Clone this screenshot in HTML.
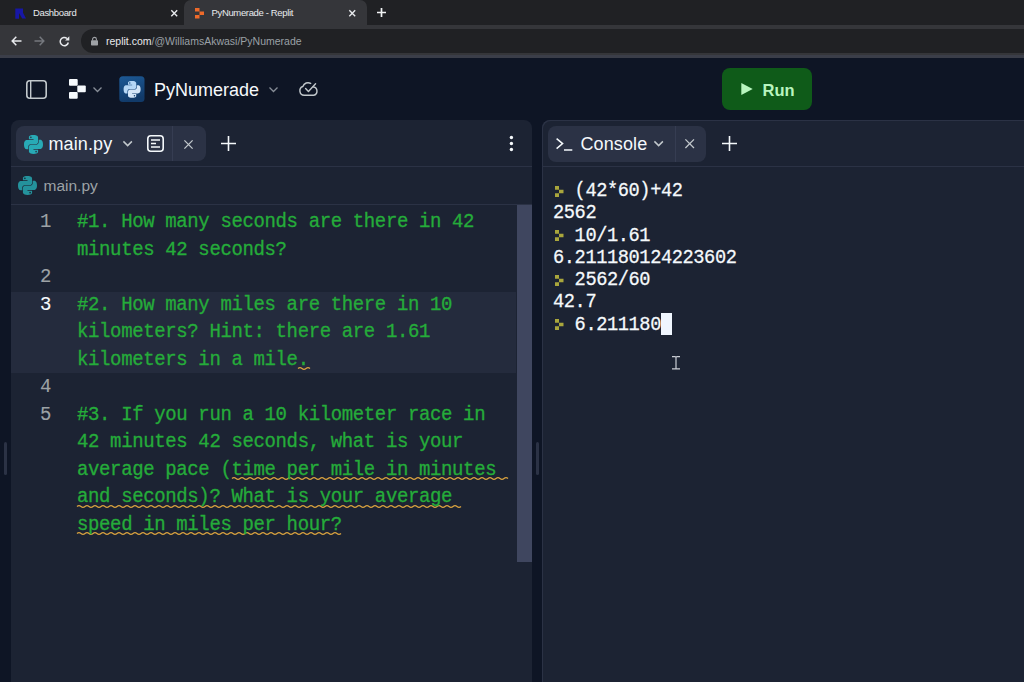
<!DOCTYPE html>
<html lang="en">
<head>
<meta charset="utf-8">
<title>PyNumerade - Replit</title>
<style>
*{box-sizing:border-box;margin:0;padding:0}
html,body{width:1024px;height:682px;overflow:hidden;background:#0e1525;font-family:"Liberation Sans",sans-serif;color:#f5f9fc}
.abs{position:absolute}
svg{position:absolute;overflow:visible}
#chrome-tabs{position:absolute;left:0;top:0;width:1024px;height:25px;background:#202124}
#chrome-addr{position:absolute;left:0;top:25px;width:1024px;height:30px;background:#35363a}
#chrome-line{position:absolute;left:0;top:55px;width:1024px;height:3px;background:#3b3e49}
.tab-active{position:absolute;left:184px;top:0;width:183px;height:25px;background:#35363a;border-radius:7px 7px 0 0}
.tabtxt{position:absolute;top:7px;font-size:9.5px;line-height:12px;color:#e8eaed;white-space:nowrap;letter-spacing:-0.35px}
.urlpill{position:absolute;left:81px;top:29px;width:960px;height:24px;border-radius:12px;background:#202124}
.url{position:absolute;left:106px;top:34.5px;font-size:10.5px;line-height:13px;color:#e8eaed;white-space:nowrap}
.url span{color:#9aa0a6}
#page{position:absolute;left:0;top:58px;width:1024px;height:624px;background:#0e1525}
.title{position:absolute;left:154px;top:22.5px;font-size:18px;line-height:18px;color:#f5f9fc;white-space:nowrap}
.run{position:absolute;left:722px;top:10px;width:90px;height:42px;border-radius:8px;background:#0f5b19}
.run span{position:absolute;left:40.5px;top:13.8px;font-size:16.5px;line-height:17px;font-weight:bold;color:#b8f5be}
.panel{position:absolute;background:#1c2333}
#left{left:11px;top:62px;width:521px;height:562px;border-radius:8px 8px 0 0}
#right{left:542px;top:62px;width:490px;height:562px;border-radius:8px 0 0 0;box-shadow:inset 1px 1px 0 #2b3245}
.pill{position:absolute;background:#2b3245;border-radius:8px}
.tabname{position:absolute;font-size:18px;letter-spacing:0.1px;line-height:18px;color:#f5f9fc;white-space:nowrap}
.hline{position:absolute;height:1px;background:#2b3245}
.crumb{position:absolute;left:32.5px;top:58px;font-size:15.5px;line-height:16px;color:#9da2a6}
#code{position:absolute;left:0;top:89px;width:505px;font-family:"Liberation Mono",monospace;font-size:19px;letter-spacing:-0.37px;line-height:27.5px;color:#25ac3a;white-space:pre;-webkit-text-stroke:0.3px #25ac3a}
.ln{position:absolute;left:0;width:40px;text-align:right;transform:scaleY(1.05);transform-origin:0 18.8px;color:#9da2a6;-webkit-text-stroke:0.1px #9da2a6}
.cl{position:absolute;left:66px;white-space:pre;transform:scaleY(1.05);transform-origin:0 18.8px}
.active{position:absolute;left:0;top:83px;width:505px;height:81px;background:#242b3d}

#con{position:absolute;left:11px;top:59.6px;transform:scaleY(1.05);transform-origin:0 0;font-family:"Liberation Mono",monospace;font-size:18.7px;letter-spacing:-0.42px;line-height:21.29px;color:#f5f9fc;white-space:pre;-webkit-text-stroke:0.25px #f5f9fc}
</style>
</head>
<body>
<div id="chrome-tabs">
  <div class="tab-active"></div>
  <svg style="left:15.3px;top:7.5px" width="11" height="11" viewBox="0 0 11 11"><path d="M0.3 0.5h3.7v10.3H0.3zM4 0.5h4v4.2l3 5.8H7.2L4 5z" fill="#1717a6"/></svg>
  <div class="tabtxt" style="left:33px">Dashboard</div>
  <svg style="left:170.5px;top:9.5px" width="6.5" height="6.5" viewBox="0 0 6.5 6.5"><path d="M0.3 0.3l5.9 5.9M6.2 0.3l-5.9 5.9" stroke="#e8eaed" stroke-width="1.4"/></svg>
  <svg style="left:195px;top:7.5px" width="9" height="10.5" viewBox="0 0 9 10.5"><path d="M0 0h4.5v3.5H0zM4.5 3.5h4.5v3.5H4.5zM0 7h4.5v3.5H0z" fill="#ee6a2a"/></svg>
  <div class="tabtxt" style="left:211.5px">PyNumerade - Replit</div>
  <svg style="left:349px;top:9.5px" width="6.5" height="6.5" viewBox="0 0 6.5 6.5"><path d="M0.3 0.3l5.9 5.9M6.2 0.3l-5.9 5.9" stroke="#e8eaed" stroke-width="1.4"/></svg>
  <svg style="left:376.5px;top:8px" width="9" height="9" viewBox="0 0 9 9"><path d="M4.5 0v9M0 4.5h9" stroke="#f1f3f4" stroke-width="1.7"/></svg>
</div>
<div id="chrome-addr">
  <svg style="left:11px;top:11px" width="11" height="10" viewBox="0 0 11 10"><path d="M10.5 5H1.5M5.3 0.8L1.2 5l4.1 4.2" stroke="#e8eaed" stroke-width="1.5" fill="none"/></svg>
  <svg style="left:34px;top:11px" width="11" height="10" viewBox="0 0 11 10"><path d="M0.5 5h9M5.7 0.8L9.8 5 5.7 9.2" stroke="#75787e" stroke-width="1.5" fill="none"/></svg>
  <svg style="left:59px;top:10.5px" width="11" height="11" viewBox="0 0 11 11"><path d="M9.3 6.5a4.1 4.1 0 1 1-1.3-4" stroke="#e8eaed" stroke-width="1.5" fill="none"/><path d="M10.3 0.3v4.2h-4.2z" fill="#e8eaed"/></svg>
</div>
<div class="urlpill"></div>
<svg style="left:91px;top:37px" width="7" height="8.5" viewBox="0 0 7 8.5"><rect x="0" y="3.3" width="7" height="5.2" rx="0.8" fill="#9fa2a6"/><path d="M1.6 3.5V2.3a1.9 1.9 0 0 1 3.8 0V3.5" stroke="#9fa2a6" stroke-width="1.1" fill="none"/></svg>
<div class="url">replit.com<span>/@WilliamsAkwasi/PyNumerade</span></div>
<div id="chrome-line"></div>

<div id="page">
  <!-- header -->
  <svg style="left:26px;top:21.5px" width="21" height="19" viewBox="0 0 21 19"><rect x="0.8" y="0.8" width="19.4" height="17.4" rx="3" fill="none" stroke="#c2c8cc" stroke-width="1.6"/><path d="M4.7 1v17" stroke="#c2c8cc" stroke-width="1.4"/></svg>
  <svg style="left:68.5px;top:20.7px" width="17" height="20" viewBox="0 0 17 20"><rect x="0" y="0" width="8.7" height="6.7" rx="1" fill="#f5f9fc"/><rect x="8.3" y="6.5" width="8.5" height="6.7" rx="1" fill="#f5f9fc"/><rect x="0" y="13" width="8.7" height="6.7" rx="1" fill="#f5f9fc"/></svg>
  <svg style="left:92.7px;top:28.8px" width="9" height="5" viewBox="0 0 9 5"><path d="M0.5 0.5l4 4 4-4" stroke="#878d97" stroke-width="1.3" fill="none"/></svg>
  <svg style="left:119px;top:18px" width="26" height="26" viewBox="0 0 26 26"><defs><linearGradient id="pg" x1="0" y1="0" x2="0.3" y2="1"><stop offset="0" stop-color="#1d5a97"/><stop offset="1" stop-color="#113a69"/></linearGradient></defs><rect x="0.3" y="0.3" width="25.2" height="25.6" rx="3.5" fill="url(#pg)"/><g transform="translate(4.6 4.9) scale(0.154)"><path d="M54.9 0C26.8 0 28.6 12.2 28.6 12.2l.03 12.6h26.8v3.8H18S0 26.5 0 54.9s15.7 27.4 15.7 27.4h9.4V69.1s-.5-15.7 15.4-15.7h26.6s14.9.2 14.9-14.4V14.9S84.3 0 54.9 0zM40.1 8.5a4.8 4.8 0 1 1 0 9.6 4.8 4.8 0 0 1 0-9.6z" fill="#b5d6f5"/><path d="M55.7 109.8c28.1 0 26.3-12.2 26.3-12.2l-.03-12.6H55.2v-3.8h37.4s18 2 18-26.3-15.7-27.4-15.7-27.4h-9.4v13.2s.5 15.7-15.4 15.7H43.5s-14.9-.2-14.9 14.4v24.1s-2.3 14.9 27.1 14.9zm14.8-8.5a4.8 4.8 0 1 1 0-9.6 4.8 4.8 0 0 1 0 9.6z" fill="#d3e5f8"/></g></svg>
  <div class="title">PyNumerade</div>
  <svg style="left:269.4px;top:29px" width="9" height="5" viewBox="0 0 9 5"><path d="M0.5 0.5l4 4 4-4" stroke="#878d97" stroke-width="1.3" fill="none"/></svg>
  <svg style="left:299px;top:24.2px" width="19.3" height="14" viewBox="0 0 19 13" preserveAspectRatio="none"><path d="M14.3 4.6A3.9 3.9 0 0 1 14.5 12.3H5A4.2 4.2 0 0 1 3.8 4.1 5.5 5.5 0 0 1 11.5 1.3" fill="none" stroke="#c2c8cc" stroke-width="1.4" stroke-linecap="round"/><path d="M6.5 6l2.8 2.8L16.3 1.6" fill="none" stroke="#c2c8cc" stroke-width="1.4" stroke-linecap="round" stroke-linejoin="round"/></svg>
  <div class="run"><svg style="left:18.5px;top:15px" width="12" height="12" viewBox="0 0 12 12"><path d="M0.3 0l11.4 6L0.3 12z" fill="#b8f5be"/></svg><span>Run</span></div>

  <!-- resize handles -->
  <div class="abs" style="left:3.5px;top:383.5px;width:3.5px;height:33px;border-radius:2px;background:#2b3245"></div>
  <div class="abs" style="left:535.5px;top:383.5px;width:3.5px;height:33px;border-radius:2px;background:#2b3245"></div>

  <!-- left panel -->
  <div class="panel" id="left">
    <div class="pill" style="left:5px;top:6px;width:190px;height:34.5px"></div>
    <svg style="left:12.5px;top:14.5px" width="19" height="19" viewBox="0 0 110.6 109.8"><path d="M54.9 0C26.8 0 28.6 12.2 28.6 12.2l.03 12.6h26.8v3.8H18S0 26.5 0 54.9s15.7 27.4 15.7 27.4h9.4V69.1s-.5-15.7 15.4-15.7h26.6s14.9.2 14.9-14.4V14.9S84.3 0 54.9 0zM40.1 8.5a4.8 4.8 0 1 1 0 9.6 4.8 4.8 0 0 1 0-9.6z" fill="#28aab5"/><path d="M55.7 109.8c28.1 0 26.3-12.2 26.3-12.2l-.03-12.6H55.2v-3.8h37.4s18 2 18-26.3-15.7-27.4-15.7-27.4h-9.4v13.2s.5 15.7-15.4 15.7H43.5s-14.9-.2-14.9 14.4v24.1s-2.3 14.9 27.1 14.9zm14.8-8.5a4.8 4.8 0 1 1 0-9.6 4.8 4.8 0 0 1 0 9.6z" fill="#28aab5"/></svg>
    <div class="tabname" style="left:37.5px;top:14.5px">main.py</div>
    <svg style="left:111.6px;top:20.8px" width="9.3" height="5.4" viewBox="0 0 9.3 5.4"><path d="M0.4 0.4l4.25 4.25 4.25-4.25" stroke="#c2c8cc" stroke-width="1.5" fill="none"/></svg>
    <svg style="left:136.4px;top:15px" width="17" height="17" viewBox="0 0 17 17"><rect x="0.8" y="0.8" width="15.4" height="15.4" rx="3" fill="none" stroke="#f5f9fc" stroke-width="1.6"/><path d="M4 5h9M4 8.5h5M4 12h9" stroke="#f5f9fc" stroke-width="1.4"/></svg>
    <div class="abs" style="left:160.5px;top:6px;width:1px;height:34.5px;background:#363d52"></div>
    <svg style="left:173px;top:19.5px" width="9" height="9" viewBox="0 0 9 9"><path d="M0.4 0.4l8.2 8.2M8.6 0.4l-8.2 8.2" stroke="#c2c8cc" stroke-width="1.3"/></svg>
    <svg style="left:210px;top:16.3px" width="15" height="15" viewBox="0 0 15 15"><path d="M7.5 0v15M0 7.5h15" stroke="#f5f9fc" stroke-width="1.6"/></svg>
    <svg style="left:498px;top:15px" width="5" height="17" viewBox="0 0 5 17"><circle cx="2.4" cy="2.5" r="1.7" fill="#f5f9fc"/><circle cx="2.4" cy="8.5" r="1.7" fill="#f5f9fc"/><circle cx="2.4" cy="14.5" r="1.7" fill="#f5f9fc"/></svg>
    <div class="hline" style="left:0;top:46px;width:521px"></div>
    <svg style="left:7px;top:56.3px" width="19" height="19" viewBox="0 0 110.6 109.8"><path d="M54.9 0C26.8 0 28.6 12.2 28.6 12.2l.03 12.6h26.8v3.8H18S0 26.5 0 54.9s15.7 27.4 15.7 27.4h9.4V69.1s-.5-15.7 15.4-15.7h26.6s14.9.2 14.9-14.4V14.9S84.3 0 54.9 0zM40.1 8.5a4.8 4.8 0 1 1 0 9.6 4.8 4.8 0 0 1 0-9.6z" fill="#24929c"/><path d="M55.7 109.8c28.1 0 26.3-12.2 26.3-12.2l-.03-12.6H55.2v-3.8h37.4s18 2 18-26.3-15.7-27.4-15.7-27.4h-9.4v13.2s.5 15.7-15.4 15.7H43.5s-14.9-.2-14.9 14.4v24.1s-2.3 14.9 27.1 14.9zm14.8-8.5a4.8 4.8 0 1 1 0-9.6 4.8 4.8 0 0 1 0 9.6z" fill="#24929c"/></svg>
    <div class="crumb">main.py</div>
    <div class="hline" style="left:0;top:84px;width:521px"></div>
    <div id="code">
      <div class="active"></div>
      <div class="ln" style="top:0">1</div>
      <div class="ln" style="top:55px">2</div>
      <div class="ln" style="top:82.5px;color:#f5f9fc;-webkit-text-stroke-color:#f5f9fc">3</div>
      <div class="ln" style="top:165px">4</div>
      <div class="ln" style="top:192.5px">5</div>
      <svg style="left:287px;top:157.2px" width="12" height="5" viewBox="0 0 12 5"><path d="M0 2.5q2 -1.9 4 0t4 0t4 0" stroke="#d9a23f" stroke-width="1.2" fill="none"/></svg>
      <svg style="left:221px;top:267.2px" width="276" height="5" viewBox="0 0 276 5"><path d="M0 2.5q2 -1.9 4 0t4 0t4 0t4 0t4 0t4 0t4 0t4 0t4 0t4 0t4 0t4 0t4 0t4 0t4 0t4 0t4 0t4 0t4 0t4 0t4 0t4 0t4 0t4 0t4 0t4 0t4 0t4 0t4 0t4 0t4 0t4 0t4 0t4 0t4 0t4 0t4 0t4 0t4 0t4 0t4 0t4 0t4 0t4 0t4 0t4 0t4 0t4 0t4 0t4 0t4 0t4 0t4 0t4 0t4 0t4 0t4 0t4 0t4 0t4 0t4 0t4 0t4 0t4 0t4 0t4 0t4 0t4 0t4 0" stroke="#d9a23f" stroke-width="1.2" fill="none"/></svg>
      <svg style="left:66px;top:294.7px" width="386" height="5" viewBox="0 0 386 5"><path d="M0 2.5q2 -1.9 4 0t4 0t4 0t4 0t4 0t4 0t4 0t4 0t4 0t4 0t4 0t4 0t4 0t4 0t4 0t4 0t4 0t4 0t4 0t4 0t4 0t4 0t4 0t4 0t4 0t4 0t4 0t4 0t4 0t4 0t4 0t4 0t4 0t4 0t4 0t4 0t4 0t4 0t4 0t4 0t4 0t4 0t4 0t4 0t4 0t4 0t4 0t4 0t4 0t4 0t4 0t4 0t4 0t4 0t4 0t4 0t4 0t4 0t4 0t4 0t4 0t4 0t4 0t4 0t4 0t4 0t4 0t4 0t4 0t4 0t4 0t4 0t4 0t4 0t4 0t4 0t4 0t4 0t4 0t4 0t4 0t4 0t4 0t4 0t4 0t4 0t4 0t4 0t4 0t4 0t4 0t4 0t4 0t4 0t4 0t4 0" stroke="#d9a23f" stroke-width="1.2" fill="none"/></svg>
      <svg style="left:66px;top:322.2px" width="266" height="5" viewBox="0 0 266 5"><path d="M0 2.5q2 -1.9 4 0t4 0t4 0t4 0t4 0t4 0t4 0t4 0t4 0t4 0t4 0t4 0t4 0t4 0t4 0t4 0t4 0t4 0t4 0t4 0t4 0t4 0t4 0t4 0t4 0t4 0t4 0t4 0t4 0t4 0t4 0t4 0t4 0t4 0t4 0t4 0t4 0t4 0t4 0t4 0t4 0t4 0t4 0t4 0t4 0t4 0t4 0t4 0t4 0t4 0t4 0t4 0t4 0t4 0t4 0t4 0t4 0t4 0t4 0t4 0t4 0t4 0t4 0t4 0t4 0t4 0" stroke="#d9a23f" stroke-width="1.2" fill="none"/></svg>
      <div class="cl" style="top:0">#1. How many seconds are there in 42</div>
      <div class="cl" style="top:27.5px">minutes 42 seconds?</div>
      <div class="cl" style="top:82.5px">#2. How many miles are there in 10</div>
      <div class="cl" style="top:110px">kilometers? Hint: there are 1.61</div>
      <div class="cl" style="top:137.5px">kilometers in a mile.</div>
      <div class="cl" style="top:192.5px">#3. If you run a 10 kilometer race in</div>
      <div class="cl" style="top:220px">42 minutes 42 seconds, what is your</div>
      <div class="cl" style="top:247.5px">average pace (time per mile in minutes </div>
      <div class="cl" style="top:275px">and seconds)? What is your average </div>
      <div class="cl" style="top:302.5px">speed in miles per hour?</div>
    </div>
    <div class="abs" style="left:505.5px;top:85px;width:15.5px;height:357px;background:#3f465f"></div>
  </div>

  <!-- right panel -->
  <div class="panel" id="right">
    <div class="pill" style="left:6px;top:6px;width:158px;height:35.5px"></div>
    <svg style="left:14px;top:17.5px" width="17" height="13" viewBox="0 0 17 13"><path d="M0.6 0.6l6 5-6 5" stroke="#f5f9fc" stroke-width="1.5" fill="none"/><path d="M8 12h8.3" stroke="#f5f9fc" stroke-width="1.5"/></svg>
    <div class="tabname" style="left:38.5px;top:14.5px">Console</div>
    <svg style="left:112.4px;top:20.8px" width="9.3" height="5.4" viewBox="0 0 9.3 5.4"><path d="M0.4 0.4l4.25 4.25 4.25-4.25" stroke="#c2c8cc" stroke-width="1.5" fill="none"/></svg>
    <div class="abs" style="left:133px;top:6px;width:1px;height:35.5px;background:#363d52"></div>
    <svg style="left:142.6px;top:19.3px" width="9.4" height="9.4" viewBox="0 0 9.4 9.4"><path d="M0.4 0.4l8.6 8.6M9 0.4l-8.6 8.6" stroke="#c2c8cc" stroke-width="1.3"/></svg>
    <svg style="left:180.3px;top:16.3px" width="15" height="15" viewBox="0 0 15 15"><path d="M7.5 0v15M0 7.5h15" stroke="#f5f9fc" stroke-width="1.6"/></svg>
    <div class="hline" style="left:0;top:46px;width:490px"></div>
    <div id="con">  (42*60)+42
2562
  10/1.61
6.211180124223602
  2562/60
42.7
  6.211180</div>
    <svg class="p" style="left:12.5px;top:65.5px" width="9" height="11" viewBox="0 0 9 11"><path d="M0 0h4v3.7H0zM4 3.7h4.5v3.6H4zM0 7.3h4V11H0z" fill="#a9a63c"/></svg>
    <svg class="p" style="left:12.5px;top:110.1px" width="9" height="11" viewBox="0 0 9 11"><path d="M0 0h4v3.7H0zM4 3.7h4.5v3.6H4zM0 7.3h4V11H0z" fill="#a9a63c"/></svg>
    <svg class="p" style="left:12.5px;top:154.7px" width="9" height="11" viewBox="0 0 9 11"><path d="M0 0h4v3.7H0zM4 3.7h4.5v3.6H4zM0 7.3h4V11H0z" fill="#a9a63c"/></svg>
    <svg class="p" style="left:12.5px;top:199.3px" width="9" height="11" viewBox="0 0 9 11"><path d="M0 0h4v3.7H0zM4 3.7h4.5v3.6H4zM0 7.3h4V11H0z" fill="#a9a63c"/></svg>
    <div class="abs" style="left:119.3px;top:192.7px;width:11px;height:22.3px;background:#f0f6ff"></div>
    <!-- mouse pointer (I-beam) -->
    <svg style="left:130px;top:236px" width="8" height="13.5" viewBox="0 0 8 13.5"><path d="M0 0.6h3M5 0.6h3M0 12.9h3M5 12.9h3M4 1v11.5M3 0.6q1 0 1 1M5 0.6q-1 0-1 1M3 12.9q1 0 1-1M5 12.9q-1 0-1-1" stroke="#c9cdd4" stroke-width="1.2" fill="none"/></svg>
  </div>
</div>
</body>
</html>
